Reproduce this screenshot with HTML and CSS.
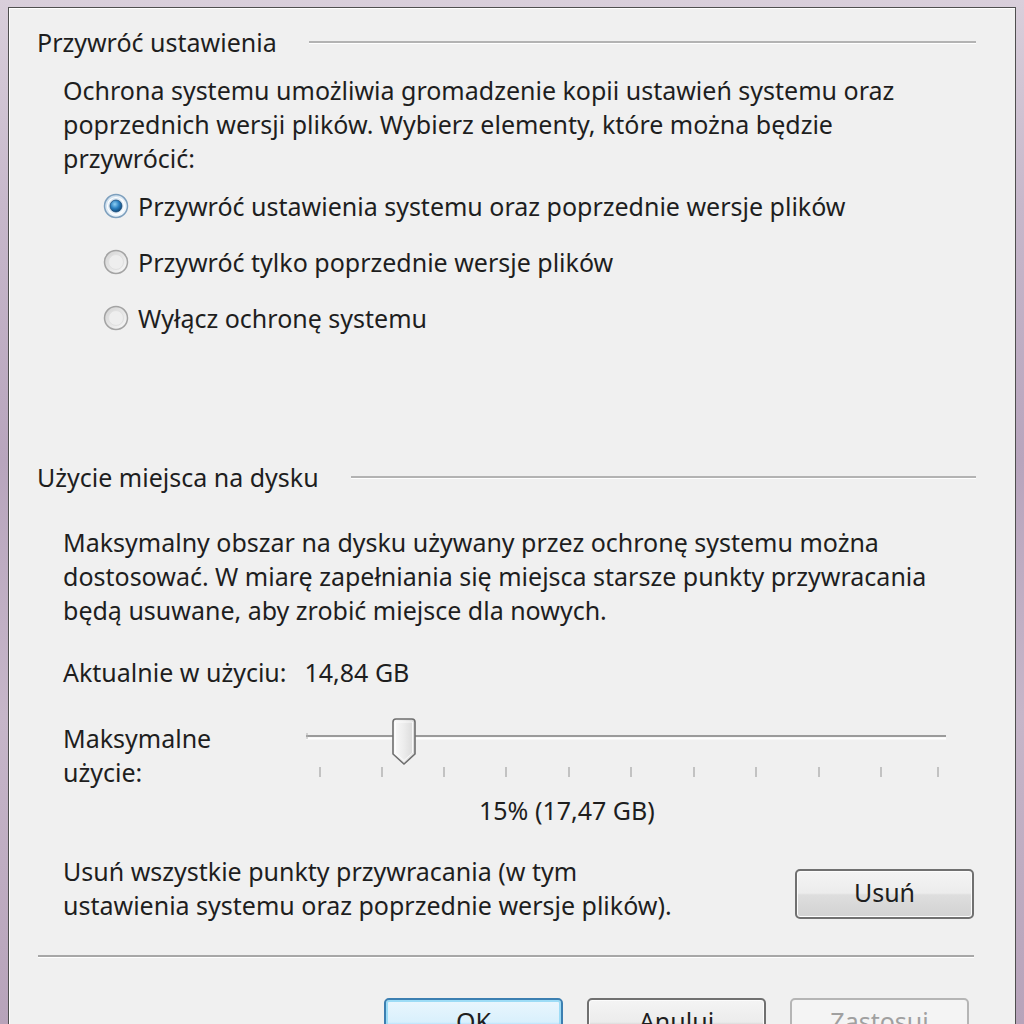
FILE: index.html
```html
<!DOCTYPE html>
<html lang="pl">
<head>
<meta charset="utf-8">
<title>Ochrona systemu</title>
<link rel="stylesheet" href="styles.css">
</head>
<body>
<div class="desktop">
  <div class="window">
    <div class="group-header"><span>Przywróć ustawienia</span><i class="rule"></i></div>
    <p class="para para1">Ochrona systemu umożliwia gromadzenie kopii ustawień systemu oraz<br>poprzednich wersji plików. Wybierz elementy, które można będzie<br>przywrócić:</p>
    <div class="radios">
      <div class="radio-row">
        <svg class="radio" viewBox="0 0 26 26" width="26" height="26">
          <defs>
            <radialGradient id="rb" cx="40%" cy="35%" r="65%"><stop offset="0" stop-color="#8fd0f5"/><stop offset="0.55" stop-color="#2a7fc0"/><stop offset="1" stop-color="#124a7a"/></radialGradient>
            <linearGradient id="rbg" x1="0" y1="0" x2="1" y2="1"><stop offset="0" stop-color="#c9dcec"/><stop offset="1" stop-color="#f6fbff"/></linearGradient>
          </defs>
          <circle cx="13" cy="13" r="11.5" fill="url(#rbg)" stroke="#7d9fbd" stroke-width="1.5"/>
          <circle cx="13" cy="13" r="8.5" fill="none" stroke="#ffffff" stroke-width="1.2"/>
          <circle cx="13" cy="13" r="6" fill="url(#rb)" stroke="#1d4d7a" stroke-width="0.8"/>
        </svg>
        <span>Przywróć ustawienia systemu oraz poprzednie wersje plików</span>
      </div>
      <div class="radio-row">
        <svg class="radio" viewBox="0 0 26 26" width="26" height="26">
          <defs><linearGradient id="rg" x1="0" y1="0" x2="1" y2="1"><stop offset="0" stop-color="#d2d2d2"/><stop offset="1" stop-color="#fafafa"/></linearGradient></defs>
          <circle cx="13" cy="13" r="11.5" fill="url(#rg)" stroke="#a3a3a3" stroke-width="1.5"/>
          <circle cx="13" cy="13" r="7.5" fill="#eeeeee" stroke="#e0e0e0" stroke-width="1"/>
        </svg>
        <span>Przywróć tylko poprzednie wersje plików</span>
      </div>
      <div class="radio-row">
        <svg class="radio" viewBox="0 0 26 26" width="26" height="26">
          <circle cx="13" cy="13" r="11.5" fill="url(#rg)" stroke="#a3a3a3" stroke-width="1.5"/>
          <circle cx="13" cy="13" r="7.5" fill="#eeeeee" stroke="#e0e0e0" stroke-width="1"/>
        </svg>
        <span>Wyłącz ochronę systemu</span>
      </div>
    </div>

    <div class="group-header header2"><span>Użycie miejsca na dysku</span><i class="rule"></i></div>
    <p class="para para2">Maksymalny obszar na dysku używany przez ochronę systemu można<br>dostosować. W miarę zapełniania się miejsca starsze punkty przywracania<br>będą usuwane, aby zrobić miejsce dla nowych.</p>

    <div class="usage"><span class="usage-label">Aktualnie w użyciu:</span><span class="usage-value">14,84 GB</span></div>

    <div class="max-row">
      <div class="max-label">Maksymalne<br>użycie:</div>
      <div class="slider-col">
        <svg class="slider" viewBox="0 0 644 70" width="644" height="70">
          <defs>
            <linearGradient id="th" x1="0" y1="0" x2="1" y2="0"><stop offset="0" stop-color="#fbfbfb"/><stop offset="0.5" stop-color="#ececec"/><stop offset="1" stop-color="#d8d8d8"/></linearGradient>
          </defs>
          <line x1="0" y1="19" x2="640" y2="19" stroke="#9b9b9b" stroke-width="2"/>
          <line x1="0" y1="21.5" x2="640" y2="21.5" stroke="#ffffff" stroke-width="2"/>
          <line x1="1" y1="16" x2="1" y2="22" stroke="#b0b0b0" stroke-width="1"/>
          <g stroke="#c2c2c2" stroke-width="2">
            <line x1="14" y1="50" x2="14" y2="60"/>
            <line x1="76" y1="50" x2="76" y2="60"/>
            <line x1="138" y1="50" x2="138" y2="60"/>
            <line x1="200" y1="50" x2="200" y2="60"/>
            <line x1="263" y1="50" x2="263" y2="60"/>
            <line x1="325" y1="50" x2="325" y2="60"/>
            <line x1="388" y1="50" x2="388" y2="60"/>
            <line x1="450" y1="50" x2="450" y2="60"/>
            <line x1="513" y1="50" x2="513" y2="60"/>
            <line x1="575" y1="50" x2="575" y2="60"/>
            <line x1="632" y1="50" x2="632" y2="60"/>
          </g>
          <path d="M87 5 Q87 2 90 2 L106 2 Q109 2 109 5 L109 37 L98 47 L87 37 Z" fill="url(#th)" stroke="#6e6e6e" stroke-width="1.6"/>
          <path d="M89.5 5 L106.5 5 L106.5 36 L98 43.5 L89.5 36 Z" fill="none" stroke="#ffffff" stroke-width="1" opacity="0.8"/>
        </svg>
        <div class="percent">15% (17,47 GB)</div>
      </div>
    </div>

    <div class="delete-row">
      <p class="delete-text">Usuń wszystkie punkty przywracania (w tym<br>ustawienia systemu oraz poprzednie wersje plików).</p>
      <button class="btn btn-delete" type="button">Usuń</button>
    </div>

    <div class="separator"></div>

    <div class="buttons">
      <button class="btn btn-default" type="button">OK</button>
      <button class="btn" type="button">Anuluj</button>
      <button class="btn btn-disabled" type="button" disabled>Zastosuj</button>
    </div>
  </div>
</div>
</body>
</html>
```
FILE: styles.css
```css
html, body {
  margin: 0;
  padding: 0;
  height: 1024px;
  overflow: hidden;
}

body {
  background: linear-gradient(180deg, #d9cfdb 0%, #c7b8cb 20%, #b8a5bd 45%, #c6b6c9 70%, #b7a3ba 100%);
  font-family: "Noto Sans", "Open Sans", "DejaVu Sans", sans-serif;
  color: #1e1e1e;
}

.desktop {
  padding: 7px 8px 0 8px;
}

.window {
  width: 1008px;
  height: 1100px;
  background: #f0f0f0;
  border: 1px solid #4f4f4f;
  box-shadow: inset 1px 1px 0 #ffffff;
  padding: 17px 0 0 28px;
  box-sizing: border-box;
  font-size: 25px;
  line-height: 34px;
}

.group-header {
  display: flex;
  align-items: center;
  height: 34px;
  width: 939px;
}

.group-header span {
  white-space: nowrap;
}

.rule {
  flex: 1;
  height: 0;
  border-top: 2px solid #b3b3b3;
  border-bottom: 1px solid #ffffff;
  margin-left: 32px;
}

.para {
  margin: 14px 0 0 26px;
  white-space: nowrap;
}

.radios {
  margin: 14px 0 0 66px;
}

.radio-row {
  display: flex;
  align-items: center;
  height: 34px;
  margin-bottom: 22px;
}

.radio {
  flex: none;
  margin-right: 9px;
}

.header2 {
  margin-top: 125px;
}

.para2 {
  margin-top: 31px;
}

.usage {
  margin: 28px 0 0 26px;
  display: flex;
}

.usage-value {
  margin-left: 18px;
}

.max-row {
  display: flex;
  margin: 32px 0 0 26px;
}

.max-label {
  width: 243px;
  flex: none;
}

.slider-col {
  display: flex;
  flex-direction: column;
}

.slider {
  display: block;
  margin-top: -4px;
}

.percent {
  margin: 6px 0 0 173px;
}

.delete-row {
  display: flex;
  align-items: flex-start;
  justify-content: space-between;
  width: 911px;
  margin: 27px 0 0 26px;
}

.delete-text {
  margin: 0;
  white-space: nowrap;
}

.btn {
  font-family: inherit;
  font-size: 25px;
  color: #1e1e1e;
  width: 179px;
  height: 50px;
  border: 2px solid #707070;
  border-radius: 5px;
  background: linear-gradient(180deg, #f4f4f4 0%, #ececec 48%, #dedede 52%, #d2d2d2 100%);
  box-shadow: inset 0 0 0 1px #fcfcfc;
  padding: 0 0 4px 0;
  flex: none;
}

.btn-delete {
  margin-top: 15px;
}

.separator {
  width: 936px;
  margin: 33px 0 0 1px;
  border-top: 2px solid #a7a7a7;
  border-bottom: 1px solid #ffffff;
}

.buttons {
  display: flex;
  gap: 24px;
  margin: 40px 0 0 347px;
}

.btn-default {
  border-color: #3c7fb1;
  box-shadow: inset 0 0 0 2px #9ddcf6;
  background: linear-gradient(180deg, #eaf6fd 0%, #d9f0fc 48%, #bee6fd 52%, #a7d9f5 100%);
}

.btn-disabled {
  border-color: #b5b5b5;
  background: #f4f4f4;
  color: #a0a0a0;
  box-shadow: none;
}
```
